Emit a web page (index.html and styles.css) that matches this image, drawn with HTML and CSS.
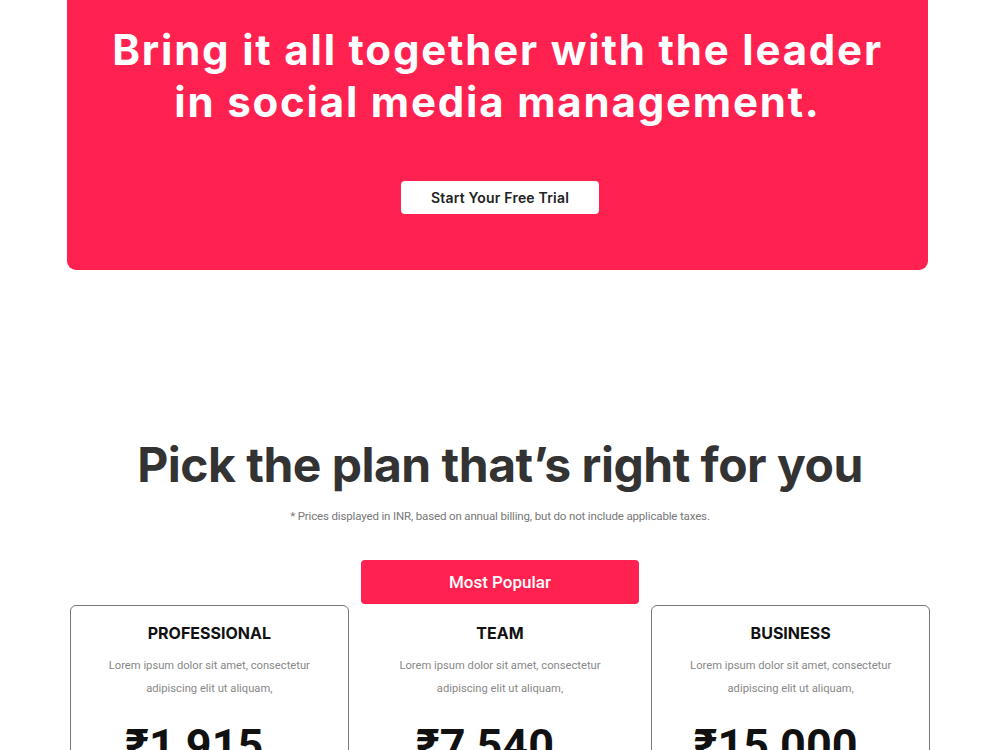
FILE: index.html
```html
<!DOCTYPE html>
<html lang="en">
<head>
    <meta charset="UTF-8">
    <meta name="viewport" content="width=device-width, initial-scale=1.0">
    <title>Pricing</title>
    <link rel="stylesheet" href="styles.css">
</head>
<body>

    <section class="cta-banner">
        <h1>Bring it all together with the leader<br>in social media management.</h1>
        <a class="cta-button" href="#">Start Your Free Trial</a>
    </section>

    <section class="pricing">
        <h2>Pick the plan that’s right for you</h2>
        <p class="pricing-note">* Prices displayed in INR, based on annual billing, but do not include applicable taxes.</p>

        <div class="plans">
            <div class="plan">
                <div class="plan-card">
                    <h3>PROFESSIONAL</h3>
                    <p>Lorem ipsum dolor sit amet, consectetur<br>adipiscing elit ut aliquam,</p>
                    <div class="price">₹1,915</div>
                </div>
            </div>
            <div class="plan popular">
                <div class="popular-tag">Most Popular</div>
                <div class="plan-card">
                    <h3>TEAM</h3>
                    <p>Lorem ipsum dolor sit amet, consectetur<br>adipiscing elit ut aliquam,</p>
                    <div class="price">₹7,540</div>
                </div>
            </div>
            <div class="plan">
                <div class="plan-card">
                    <h3>BUSINESS</h3>
                    <p>Lorem ipsum dolor sit amet, consectetur<br>adipiscing elit ut aliquam,</p>
                    <div class="price">₹15,000</div>
                </div>
            </div>
        </div>
    </section>

</body>
</html>
```

FILE: styles.css
```css
body {
    margin: 0;
    font-family: Roboto, "Liberation Sans", sans-serif;
    background-color: #fff;
    color: #222;
}

.cta-banner {
    width: 861px;
    height: 270px;
    box-sizing: border-box;
    margin: 0 0 0 67px;
    padding-top: 24px;
    background-color: #ff2150;
    border-radius: 0 0 9px 9px;
    text-align: center;
}

.cta-banner h1 {
    margin: 0;
    font-family: Inter, "Open Sans", sans-serif;
    font-size: 42px;
    font-weight: 700;
    line-height: 52px;
    letter-spacing: 1.8px;
    color: #fff;
}

.cta-button {
    display: inline-block;
    margin: 53px 0 0 5px;
    width: 198px;
    height: 33px;
    line-height: 33px;
    background-color: #fff;
    border-radius: 4px;
    font-family: Inter, "Open Sans", sans-serif;
    font-size: 14px;
    font-weight: 600;
    letter-spacing: 0.2px;
    color: #222;
    text-decoration: none;
}

.pricing {
    width: 860px;
    margin: 0 auto;
    padding-top: 165px;
    text-align: center;
}

.pricing h2 {
    margin: 0;
    font-family: Inter, "Open Sans", sans-serif;
    font-size: 48px;
    font-weight: 700;
    line-height: 60px;
    letter-spacing: -0.5px;
    color: #333;
}

.pricing-note {
    margin: 14px 0 0;
    font-size: 11.5px;
    letter-spacing: -0.15px;
    color: #777;
}

.plans {
    display: grid;
    grid-template-columns: repeat(3, 1fr);
    column-gap: 12px;
    align-items: end;
    margin-top: 37px;
}

.popular-tag {
    height: 44px;
    line-height: 44px;
    margin-bottom: 1px;
    background-color: #ff2150;
    border-radius: 4px;
    font-size: 17px;
    font-weight: 500;
    color: #fff;
}

.plan-card {
    height: 200px;
    box-sizing: border-box;
    padding-top: 17px;
    border: 1px solid #777;
    border-radius: 6px;
}

.popular .plan-card {
    border-color: transparent;
}

.plan-card h3 {
    margin: 0;
    font-family: Inter, "Open Sans", sans-serif;
    font-size: 16px;
    font-weight: 700;
    color: #111;
}

.plan-card p {
    margin: 11px 0 0;
    font-size: 11.2px;
    line-height: 23px;
    color: #888;
}

.price {
    margin-top: 19px;
    padding-right: 30px;
    font-size: 45px;
    font-weight: 700;
    color: #111;
}
```
